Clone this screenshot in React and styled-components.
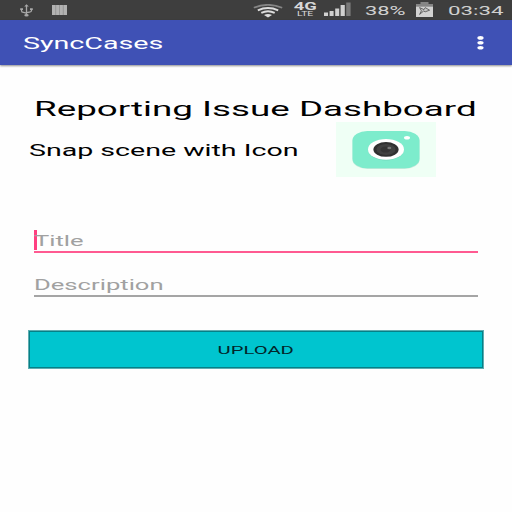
import React from "react";
import styled, { createGlobalStyle } from "styled-components";

const GlobalStyle = createGlobalStyle`
  * { box-sizing: border-box; }
  body { margin: 0; background: #fff; font-family: Roboto, sans-serif; overflow: hidden; }
`;

const Screen = styled.div`
  width: 512px;
  height: 512px;
  display: flex;
  flex-direction: column;
  background: #fefefe;
  overflow: hidden;
`;

/* Text of the wide display: glyphs are stretched horizontally. */
const WideText = styled.span`
  display: block;
  width: max-content;
  white-space: nowrap;
  font-size: ${(p) => p.$size}px;
  line-height: ${(p) => p.$line || 20}px;
  font-weight: ${(p) => p.$weight || 400};
  color: ${(p) => p.$color || "#000"};
  transform: scaleX(${(p) => p.$stretch || 1.778});
  transform-origin: ${(p) => p.$origin || "left"} center;
`;

const StatusBar = styled.header`
  height: 20px;
  flex: none;
  display: grid;
  grid-template-columns: 52px 201px 40px 31px 41px 50px 33px 1fr;
  background: #3e3e3e;
`;

const Slot = styled.div`
  min-width: 0;
  padding-top: ${(p) => p.$top || 0}px;
  padding-left: ${(p) => p.$left || 0}px;
  svg { display: block; }
`;

const Network = styled.div`
  display: flex;
  flex-direction: column;
  align-items: center;
  width: 24px;
`;

const AppBar = styled.nav`
  height: 45px;
  flex: none;
  display: flex;
  align-items: center;
  justify-content: space-between;
  padding: 1px 28px 0 23px;
  background: #3f51b5;
  box-shadow: 0 1px 2px rgba(0, 0, 0, 0.45);
`;

const MenuButton = styled.button`
  padding: 0;
  border: 0;
  background: none;
  svg { display: block; }
`;

const Content = styled.main`
  display: flex;
  flex-direction: column;
  padding: 31px 28px 0;
`;

const Heading = styled.h1`
  margin: 0;
  padding-left: 6px;
  height: 26px;
`;

const SnapRow = styled.section`
  display: flex;
  height: 56px;
`;

const SnapLabel = styled.div`
  width: 308px;
  padding: 19px 0 0 1px;
`;

const Camera = styled.svg`
  display: block;
  width: 100px;
  height: 55px;
`;

const Field = styled.div`
  height: ${(p) => p.$height}px;
  margin: ${(p) => p.$top}px 6px 0;
  display: flex;
  align-items: flex-start;
  border-bottom: 2px solid ${(p) => (p.$active ? "#ff5a91" : "#a5a5a5")};
`;

const Caret = styled.i`
  width: 3px;
  height: 20px;
  margin-right: -3px;
  background: #ff4081;
`;

const Hint = styled.div`
  padding-top: ${(p) => p.$top || 0}px;
`;

const UploadButton = styled.button`
  display: flex;
  justify-content: center;
  align-items: center;
  width: 456px;
  height: 39px;
  margin-top: 33px;
  padding: 0;
  border: 1px solid #5eaeb2;
  background: #00c5cf;
  box-shadow: inset 0 0 0 1px #068087;
  font-family: inherit;
`;

const UsbIcon = () => (
  <svg width="13" height="13" viewBox="0 0 13 13" fill="none" stroke="#a9a9a9">
    <path d="M6.5 1.5v10M1.5 5.5v1.2q0 1.5 2 1.7l3 .8M11.5 5.5v1q0 1.4-2 1.6l-3 .6" strokeWidth="1.3" />
    <path d="M6.5 .2 8.8 2.5H4.2zM.2 4.2h2.8v1.7H.2zM10 4.2h2.8v1.7H10z" fill="#a9a9a9" stroke="none" />
    <ellipse cx="6.5" cy="11.3" rx="2.2" ry="1.3" fill="#a9a9a9" stroke="none" />
  </svg>
);

const BarsIcon = () => (
  <svg width="15" height="10" viewBox="0 0 15 10">
    <path d="M0 0h15v10H0z" fill="#b2b2b2" />
    <path d="M3.7 0v10M7.5 0v10M11.3 0v10" stroke="#898989" strokeWidth=".7" />
  </svg>
);

const WifiIcon = () => (
  <svg width="30" height="14" viewBox="0 0 30 14" fill="none">
    <path d="M.8 3.8Q15-2.2 29.2 3.8" stroke="#858585" strokeWidth="1.7" />
    <path d="M4.8 6.3Q15 1.9 25.2 6.3" stroke="#dedede" strokeWidth="2" />
    <path d="M8.3 8.8Q15 5.6 21.7 8.8" stroke="#dedede" strokeWidth="1.9" />
    <path d="M11 11Q15 8.8 19 11L15 13.6z" fill="#dedede" />
  </svg>
);

const SignalIcon = () => (
  <svg width="27" height="14" viewBox="0 0 27 14" fill="#d0d0d0">
    <path d="M0 10.4h4V14H0zM5.6 9h4v5h-4zM11.2 6.5h4V14h-4zM16.6 3h4.2v11h-4.2z" />
    <path d="M22.2 .5h4.4V14h-4.4z" fill="#797979" />
  </svg>
);

const BatteryIcon = () => (
  <svg width="17" height="15" viewBox="0 0 17 15">
    <path d="M4.5 0h8v2H17v3H0V2h4.5z" fill="#858585" />
    <path d="M0 4.7h17V15H0z" fill="#d2d2d2" />
    <path d="M3.6 5.6 8 7.6 9.2 5.6 13.6 8.2 9.2 9.8 7.6 9 3.6 12.4 5.4 8.8z" fill="#c4c4c4" stroke="#4c4c4c" strokeWidth=".8" />
  </svg>
);

const MenuIcon = () => (
  <svg width="7" height="14" viewBox="0 0 7 14" fill="#fff">
    <ellipse cx="3.5" cy="1.9" rx="3.1" ry="1.8" />
    <ellipse cx="3.5" cy="6.8" rx="3.1" ry="1.8" />
    <ellipse cx="3.5" cy="11.7" rx="3.1" ry="1.8" />
  </svg>
);

const CameraPicture = () => (
  <Camera viewBox="0 0 100 55">
    <path d="M0 0h100v55H0z" fill="#effff5" />
    <rect x="16.5" y="9.6" width="67" height="37.4" rx="15" ry="9.5" fill="#c8eadc" />
    <rect x="16.5" y="9" width="67" height="37.2" rx="15" ry="9.5" fill="#7deccc" />
    <ellipse cx="50" cy="27.8" rx="18" ry="10.6" fill="#72d8bb" />
    <ellipse cx="50" cy="27.4" rx="18" ry="10.3" fill="#fff" />
    <ellipse cx="50" cy="27.4" rx="12.6" ry="7.4" fill="#303030" />
    <ellipse cx="50" cy="27.4" rx="9.5" ry="5.5" fill="#404040" />
    <ellipse cx="49.5" cy="27.6" rx="5" ry="3" fill="#343434" />
    <ellipse cx="53.3" cy="26" rx="2" ry="1.2" fill="#777" />
    <ellipse cx="71" cy="15.8" rx="3" ry="1.8" fill="#fff" />
  </Camera>
);

export default function App() {
  return (
    <>
      <GlobalStyle />
      <Screen>
        <StatusBar>
          <Slot $left={20} $top={4}><UsbIcon /></Slot>
          <Slot $top={5}><BarsIcon /></Slot>
          <Slot $top={4}><WifiIcon /></Slot>
          <Slot $top={1}>
            <Network>
              <WideText $size={11.5} $line={10} $weight={700} $color="#d8d8d8" $origin="center" $stretch={1.6}>4G</WideText>
              <WideText $size={6.5} $line={6} $color="#d8d8d8" $origin="center" $stretch={1.6}>LTE</WideText>
            </Network>
          </Slot>
          <Slot $top={2}><SignalIcon /></Slot>
          <Slot><WideText $size={13.5} $line={21} $color="#d0d0d0" $stretch={1.62}>38%</WideText></Slot>
          <Slot $left={1} $top={2}><BatteryIcon /></Slot>
          <Slot><WideText $size={13.5} $line={21} $color="#d0d0d0" $stretch={1.65}>03:34</WideText></Slot>
        </StatusBar>
        <AppBar>
          <WideText $size={16} $line={21} $color="#fff" $stretch={1.79}>SyncCases</WideText>
          <MenuButton aria-label="More options"><MenuIcon /></MenuButton>
        </AppBar>
        <Content>
          <Heading><WideText $size={21} $line={26} $stretch={1.75}>Reporting Issue Dashboard</WideText></Heading>
          <SnapRow>
            <SnapLabel><WideText $size={16.5} $stretch={1.73}>Snap scene with Icon</WideText></SnapLabel>
            <CameraPicture />
          </SnapRow>
          <Field $active $height={23} $top={52}>
            <Caret />
            <Hint $top={0.5}><WideText $size={14.8} $color="#a1a1a1" $stretch={1.73}>Title</WideText></Hint>
          </Field>
          <Field $height={23} $top={21}>
            <Hint $top={0.5}><WideText $size={14.8} $color="#a1a1a1" $stretch={1.73}>Description</WideText></Hint>
          </Field>
          <UploadButton>
            <WideText $size={11.5} $origin="center" $color="#03262a" $stretch={1.76}>UPLOAD</WideText>
          </UploadButton>
        </Content>
      </Screen>
    </>
  );
}
